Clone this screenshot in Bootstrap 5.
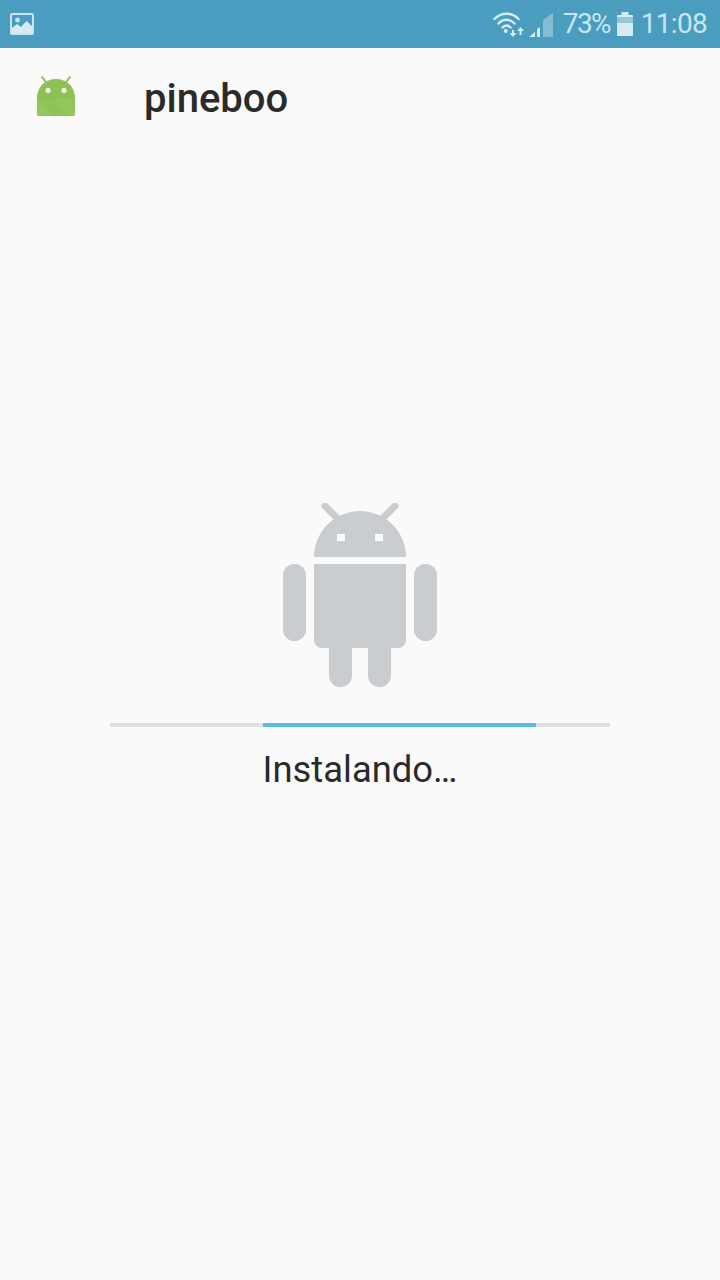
<!DOCTYPE html>
<html lang="es">
<head>
  <meta charset="UTF-8">
  <meta name="viewport" content="width=device-width, initial-scale=1.0">
  <title>pineboo</title>
  <link href="https://cdn.jsdelivr.net/npm/bootstrap@5.3.3/dist/css/bootstrap.min.css" rel="stylesheet">
  <style>
    body {
      background-color: #fafafa;
      color: #2a2a2a;
      font-family: Roboto, sans-serif;
      height: 1280px;
      overflow: hidden;
    }
    .status-strip {
      height: 48px;
      background-color: #4a9dbf;
      color: #c9e5f0;
      font-size: 28px;
      line-height: 48px;
      padding: 0 13px 0 10px;
    }
    .status-pct {
      width: 50px;
      margin-left: 10px;
      letter-spacing: -1.6px;
    }
    .status-time {
      letter-spacing: -0.7px;
    }
    .app-head {
      height: 100px;
      padding-left: 36px;
    }
    .app-icon {
      margin-bottom: 4px;
    }
    .app-title {
      margin-left: 68px;
      font-size: 40px;
      font-weight: 500;
      line-height: 48px;
      margin-top: 2px;
    }
    .install-box {
      padding-top: 355px;
    }
    .robot {
      display: block;
      margin: 0 auto 35px;
    }
    .install-progress {
      width: 500px;
      height: 4px;
      border-radius: 0;
      background-color: #e0e0e0;
    }
    .install-progress .progress-bar {
      background-color: #5dbde0;
    }
    .install-label {
      margin-top: 19px;
      font-size: 36.400px;
      line-height: 48px;
    }
  </style>
</head>
<body>
  <!-- Status bar -->
  <div class="status-strip d-flex align-items-center">
    <svg width="24" height="23" viewBox="0 0 24 23">
      <rect width="24" height="22" rx="2.5" fill="#c9e5f0"/>
      <rect x="2" y="2" width="20" height="18" fill="#4a9dbf"/>
      <circle cx="7.5" cy="7" r="2.400" fill="#c9e5f0"/>
      <path d="M2 20v-5l5-4 4 3 5.500-6 5.500 5v7z" fill="#d6ebf3"/>
    </svg>
    <div class="flex-grow-1"></div>
    <svg width="60" height="26" viewBox="0 0 60 26">
      <g fill="none" stroke="#d6ebf3" stroke-width="2.400" stroke-linecap="round">
        <path d="M1.500 8C8 1 19 1 25.500 8"/>
        <path d="M5.500 12.500C10 7.500 17 7.500 21.500 12.500"/>
        <path d="M9.500 16.500c2.500-2.500 5.500-2.500 8 0"/>
      </g>
      <circle cx="12.700" cy="20" r="2" fill="#d6ebf3"/>
      <path d="M19 19h2v3h2.500L20 26l-3.500-4H19zM27.500 16l3.500 4h-2.500v4h-2v-4H24z" fill="#d6ebf3"/>
      <path d="M36 26l6-5v5zM44 26V18l3-2v10z" fill="#d6ebf3"/>
      <path d="M50 26V9l10-7v24z" fill="#c9e5f0" opacity=".45"/>
    </svg>
    <span class="status-pct">73%</span>
    <svg class="ms-1" width="16" height="24" viewBox="0 0 16 24">
      <path d="M4.500 0h7v3H15a1 1 0 0 1 1 1v19a1 1 0 0 1-1 1H1a1 1 0 0 1-1-1V4a1 1 0 0 1 1-1h3.500z" fill="#d6ebf3"/>
      <rect y="5" width="16" height="6" fill="#4a9dbf" opacity=".45"/>
    </svg>
    <span class="status-time ms-2">11:08</span>
  </div>

  <!-- App header -->
  <div class="app-head d-flex align-items-center">
    <svg class="app-icon" width="40" height="42" viewBox="36 75 40 42">
      <path d="M42 77l5.500 7M70 77l-5.500 7" stroke="#8dc155" stroke-width="2" stroke-linecap="round"/>
      <path d="M37 114V98c0-11 8-19 19-19s19 8 19 19v16a2 2 0 0 1-2 2H39a2 2 0 0 1-2-2z" fill="#8dc155"/>
      <path d="M37 99h38v15a2 2 0 0 1-2 2H39a2 2 0 0 1-2-2z" fill="#93c75b"/>
      <path d="M37 99h16l16 17H53z" fill="#84b84e" opacity=".25"/>
      <circle cx="48" cy="90.500" r="2.500" fill="#fafafa"/>
      <circle cx="64" cy="90.500" r="2.500" fill="#fafafa"/>
    </svg>
    <span class="app-title">pineboo</span>
  </div>

  <!-- Installer -->
  <div class="install-box text-center">
    <svg class="robot" width="154" height="185" viewBox="283 503 154 185">
      <g fill="#c9cdd0">
        <path d="M325 506l13 13M395 506l-13 13" stroke="#c9cdd0" stroke-width="7" stroke-linecap="round"/>
        <path d="M314 557a46 46 0 0 1 92 0z"/>
        <path d="M314 564h92v76a8 8 0 0 1-8 8h-76a8 8 0 0 1-8-8z"/>
        <rect x="283" y="564" width="23" height="77" rx="11.500"/>
        <rect x="414" y="564" width="23" height="77" rx="11.500"/>
        <path d="M329 640h23v35.500a11.500 11.500 0 0 1-23 0z"/>
        <path d="M368 640h23v35.500a11.500 11.500 0 0 1-23 0z"/>
      </g>
      <rect x="337" y="534" width="8" height="7" fill="#fafafa"/>
      <rect x="375" y="534" width="8" height="7" fill="#fafafa"/>
    </svg>
    <div class="progress install-progress mx-auto">
      <div class="progress-bar" style="width: 273px; margin-left: 153px"></div>
    </div>
    <div class="install-label">Instalando…</div>
  </div>

  <script src="https://cdn.jsdelivr.net/npm/bootstrap@5.3.3/dist/js/bootstrap.bundle.min.js"></script>
</body>
</html>
